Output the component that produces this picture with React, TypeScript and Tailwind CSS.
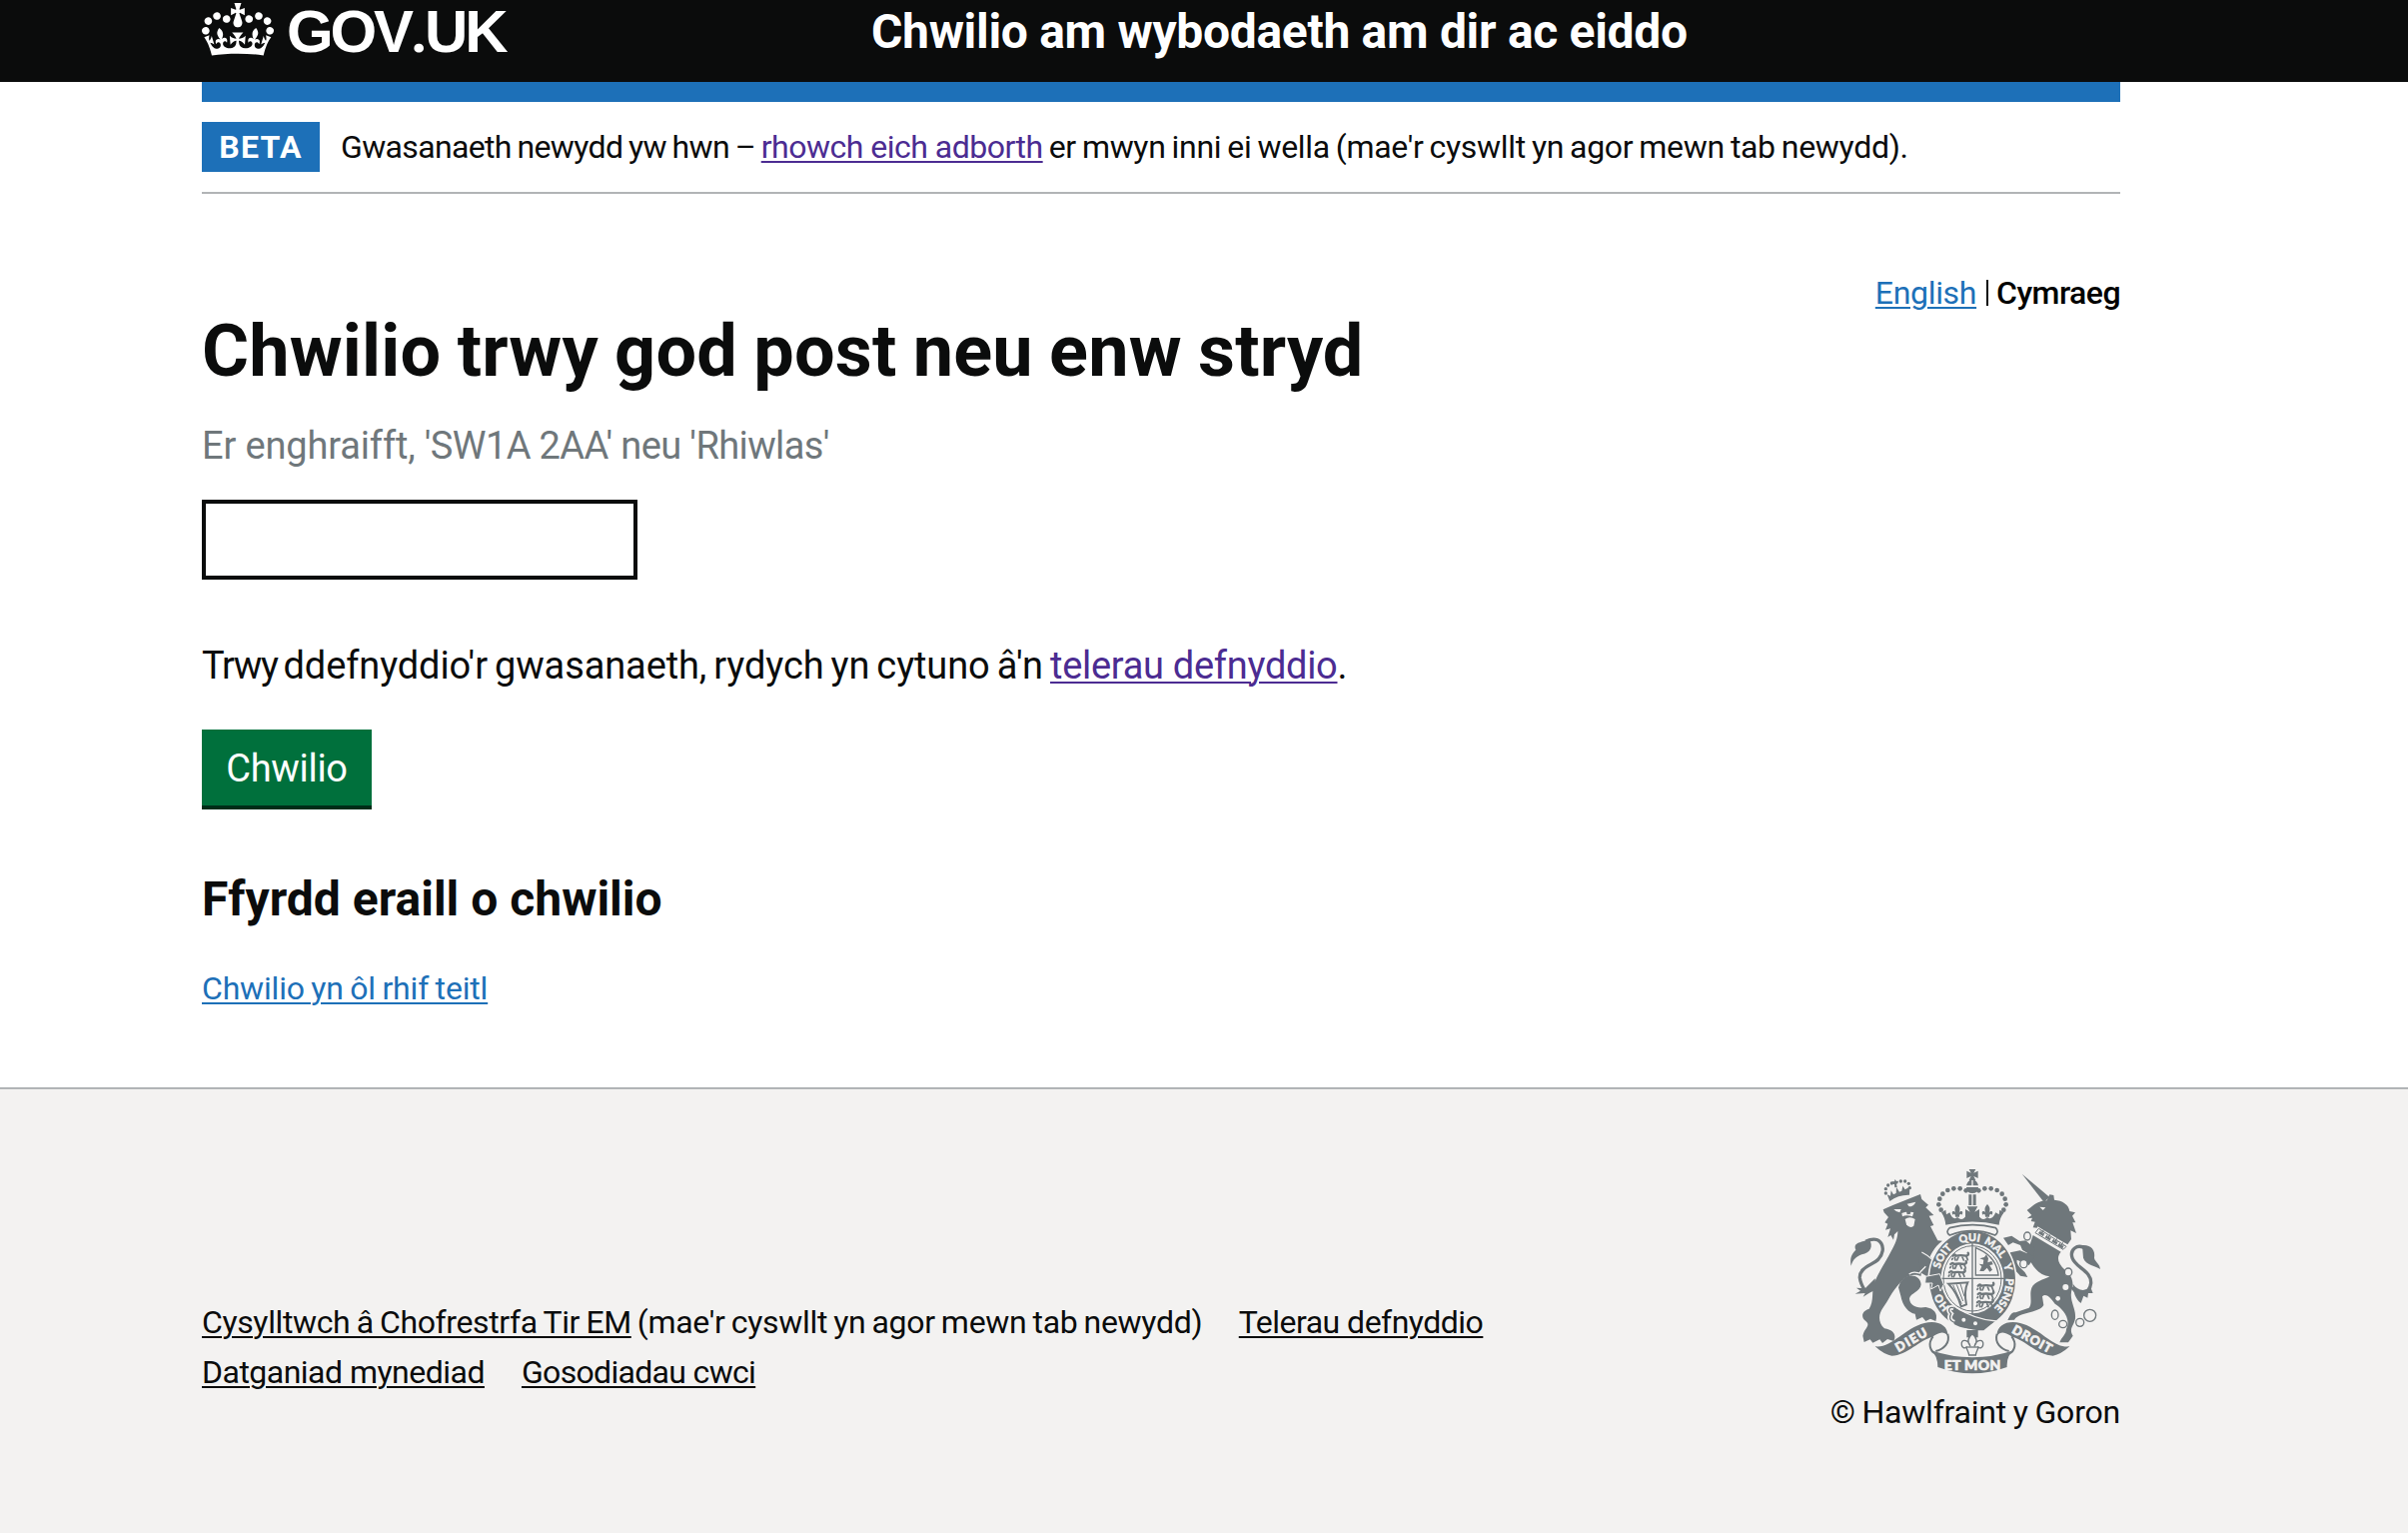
import type { ReactNode } from "react";

function Crown() {
  return (
    <svg viewBox="0 0 132 97" className="mt-[3px] h-[53px] w-[72px] shrink-0" fill="currentColor" aria-hidden="true">
      <path
        fillRule="evenodd"
        d="M25 30.2c3.5 1.5 7.7-.2 9.1-3.7 1.5-3.6-.2-7.8-3.9-9.2-3.6-1.4-7.6.3-9.1 3.9-1.4 3.5.3 7.5 3.9 9zM9 39.5c3.6 1.5 7.8-.2 9.2-3.7 1.5-3.6-.2-7.8-3.9-9.1-3.6-1.5-7.6.2-9.1 3.8-1.4 3.5.3 7.5 3.8 9zM4.4 57.2c3.5 1.5 7.7-.2 9.1-3.8 1.5-3.6-.2-7.7-3.9-9.1-3.5-1.5-7.6.3-9.1 3.8-1.4 3.5.3 7.6 3.9 9.1zm38.3-21.4c3.5 1.5 7.7-.2 9.1-3.8 1.5-3.6-.2-7.7-3.9-9.1-3.6-1.5-7.6.3-9.1 3.8-1.3 3.6.4 7.7 3.9 9.1zm64.4-5.6c-3.6 1.5-7.8-.2-9.1-3.7-1.5-3.6.2-7.8 3.8-9.2 3.6-1.4 7.7.3 9.2 3.9 1.3 3.5-.4 7.5-3.9 9zm15.9 9.3c-3.6 1.5-7.7-.2-9.1-3.7-1.5-3.6.2-7.8 3.7-9.1 3.6-1.5 7.7.2 9.2 3.8 1.5 3.5-.3 7.5-3.8 9zm4.7 17.7c-3.6 1.5-7.8-.2-9.2-3.8-1.5-3.6.2-7.7 3.9-9.1 3.6-1.5 7.7.3 9.2 3.8 1.3 3.5-.4 7.6-3.9 9.1zM89.3 35.8c-3.6 1.5-7.8-.2-9.2-3.8-1.4-3.6.2-7.7 3.9-9.1 3.6-1.5 7.7.3 9.2 3.8 1.4 3.6-.3 7.7-3.9 9.1zM69.7 17.7l8.9 4.7V9.3l-8.9 2.8c-.2-.3-.5-.6-.9-.9L72.4 0H59.6l3.5 11.2c-.3.3-.6.5-.9.9l-8.8-2.8v13.1l8.8-4.7c.3.3.6.7.9.9l-5 15.4v.1c-.2.8-.4 1.6-.4 2.4 0 4.1 3.1 7.5 7 8.1h.2c.3 0 .7.1 1 .1.4 0 .7 0 1-.1h.2c4-.6 7.1-4.1 7.1-8.1 0-.8-.1-1.7-.4-2.4V34l-5.1-15.4c.4-.2.7-.6 1-.9zM66 92.8c16.9 0 32.8 1.1 47.1 3.2 4-16.9 8.9-26.7 14-33.5l-9.6-3.4c1 4.9 1.1 7.2 0 10.2-1.5-1.4-3-4.3-4.2-8.7L108.6 76c2.8-2 5-3.2 7.5-3.3-4.4 9.4-10 11.9-13.6 11.2-4.3-.8-6.3-4.6-5.6-7.9 1-4.7 5.7-5.9 8-.5 4.3-8.7-3-11.4-7.6-8.8 7.1-7.2 7.9-13.5 2.1-21.1-8 6.1-8.1 12.3-4.5 20.8-4.7-5.4-12.1-2.5-9.5 6.2 3.4-5.2 7.9-2 7.2 3.1-.6 4.3-6.4 7.8-13.5 7.2-10.3-.9-10.9-8-11.2-13.8 2.5-.5 7.1 1.8 11 7.3L80.2 60c-4.1 4.4-8 5.3-12.3 5.4 1.4-4.4 8-11.6 8-11.6H55.5s6.4 7.2 7.9 11.6c-4.2-.1-8-1-12.3-5.4l1.4 16.4c3.9-5.5 8.5-7.7 10.9-7.3-.3 5.8-.9 12.8-11.1 13.8-7.2.6-12.9-2.9-13.5-7.2-.7-5 3.8-8.3 7.1-3.1 2.7-8.7-4.6-11.6-9.4-6.2 3.7-8.5 3.6-14.7-4.6-20.8-5.8 7.6-5 13.9 2.2 21.1-4.7-2.6-11.9.1-7.7 8.8 2.3-5.5 7.1-4.2 8.1.5.7 3.3-1.3 7.1-5.7 7.9-3.5.7-9-1.8-13.5-11.2 2.5.1 4.7 1.3 7.5 3.3l-4.7-15.4c-1.2 4.4-2.7 7.2-4.3 8.7-1.1-3-.9-5.3 0-10.2l-9.5 3.4c5 6.9 9.9 16.7 14 33.5 14.8-2.1 30.8-3.2 47.7-3.2z"
      />
    </svg>
  );
}

const INK = "#6f777b";
const PAPER = "#f3f2f1";

/* Dots of the left arch of the central crown; the right arch mirrors them. */
const ARCH: [number, number][] = [
  [383, 94], [365, 88], [346, 88], [328, 93], [313, 104], [304, 119], [301, 136], [308, 152],
];

/* Links of the unicorn's chain. */
const CHAIN: [number, number, number, number][] = [
  [567, 231, 10, 12], [556, 314, 11, 12], [690, 339, 11, 12], [650, 467, 10, 14],
  [674, 495, 12, 11], [725, 490, 12, 12], [755, 469, 18, 18],
];

function WalkingLion({ x, y }: { x: number; y: number }) {
  return (
    <g transform={`translate(${x} ${y})`} fill="none" stroke={INK} strokeWidth="7" strokeLinecap="round">
      <path d="M3 4 q6 -7 10 0 q14 -3 30 0 q10 -2 6 -9" />
      <path d="M3 12 l-2 3 m8 -7 l2 9 m9 -9 l-4 9 m16 -9 l4 9 m8 -11 l4 10" strokeWidth="5" />
    </g>
  );
}

function Fleur({ x, y }: { x: number; y: number }) {
  return (
    <path
      transform={`translate(${x} ${y})`}
      d="M0 -20 C10 -10 8 -2 5 6 C12 -4 20 4 13 12 C10 6 6 10 6 18 L-6 18 C-6 10 -10 6 -13 12 C-20 4 -12 -4 -5 6 C-8 -2 -10 -10 0 -20Z"
    />
  );
}

function CoatOfArms() {
  return (
    <svg viewBox="0 0 810 660" className="h-[220px] w-[270px]" fill={INK} aria-hidden="true">
      {/* lion */}
      <path d="M134 151 L165 137 L246 105 L250 120 L270 137 L262 145 L286 168 L272 170 L286 198 L276 201 L298 244 L312 245 C288 262 274 290 268 310 L250 335 L247 352 C238 344 205 345 186 370 C158 400 150 425 133 447 C120 465 118 490 138 508 C165 512 175 528 166 546 L147 540 L132 552 L124 541 L103 551 L95 541 L77 549 L73 530 C78 505 98 500 82 486 C66 475 70 455 92 449 C108 425 98 395 108 370 C120 340 145 302 157 278 C170 255 178 238 178 216 L168 226 L165 242 L157 228 L148 234 L156 208 L141 212 L148 194 L139 190 L150 174 L137 160Z" />
      <path d="M186 368 C205 340 246 345 248 376 C246 398 216 402 213 418 C214 440 235 449 262 444 C286 448 300 462 292 486 L276 479 L262 486 L252 474 L234 482 L230 464 C212 462 192 440 187 410 L180 385Z" />
      <path d="M250 278 C282 294 302 314 306 344 L314 374 L305 394 L300 376 L276 388 L280 370 L260 370 L266 352 L246 340 L240 300Z" />
      <path d="M250 279 C280 294 298 312 306 344" fill="none" stroke={PAPER} strokeWidth="4" />
      <path d="M212 345 C232 330 245 350 246 338 L262 322" fill="none" stroke={PAPER} strokeWidth="4" />
      <g fill={PAPER}>
        <path d="M166 150 L188 150 L184 160 Q174 160 166 150Z" />
        <path d="M206 134 L232 128 Q226 142 212 142Z" />
        <path d="M190 162 Q206 154 226 160 L222 172 Q204 166 192 172Z" />
        <path d="M200 180 Q214 170 230 180 L226 200 Q214 210 204 196Z" />
      </g>
      <path d="M204 156 L218 150 L216 164 L206 166Z" />
      {/* lion's tail */}
      <path d="M82 247 C128 224 148 268 120 300 C102 318 62 325 64 356 C66 372 72 382 78 392" fill="none" stroke={INK} strokeWidth="10" />
      <path d="M92 240 C106 260 96 282 70 286 C54 292 44 300 38 320 C34 298 38 286 52 272 C42 248 72 250 92 240Z" />
      <path d="M54 386 L80 388 L110 358 L112 392 Q96 398 74 413 L80 402 L50 404 L66 395Z" />
      {/* lion's crown */}
      <g>
        {[[142, 102], [142, 89], [149, 78], [160, 72], [187, 66], [200, 66], [211, 73], [214, 86]].map(([x, y]) => (
          <circle key={`${x}-${y}`} cx={x} cy={y} r="5" />
        ))}
        <path d="M170 60 l4 6 6 -1 -2 8 -4 1 2 10 -7 1 -1 -10 -5 0 -1 -8 6 0z" />
        <path d="M146 106 l10 4 2 -16 7 12 8 -4 1 -18 9 14 7 -3 3 -15 7 11 14 -8 -1 24 Q180 106 154 126Z" />
      </g>
      {/* unicorn */}
      <path d="M551 44 L634 114 L617 129Z" />
      <path d="M566 153 C585 138 602 124 626 124 L634 106 L646 108 L648 122 C672 124 692 136 694 156 L711 160 L702 170 L712 190 L703 190 L714 222 L697 214 L699 240 L688 256 L640 232 L596 206 L584 205 L590 188 L578 186 L582 176 L566 178 L580 168Z" />
      <path d="M604 143 l18 2 -8 8z" fill={PAPER} />
      <path d="M598 202 L690 258 L676 276 L588 224Z" fill={PAPER} />
      <path d="M601 208 L684 262 L675 271 L591 221Z" fill={PAPER} stroke={INK} strokeWidth="3" />
      <g>
        {[[612, 219], [632, 232], [652, 244], [670, 256]].map(([x, y]) => (
          <path key={x} transform={`translate(${x} ${y}) rotate(32)`} d="M-9 9 L-7 -3 L-3 3 L0 -11 L3 3 L7 -3 L9 9Z" />
        ))}
      </g>
      <path d="M584 228 L668 278 C654 294 658 312 680 332 C702 350 706 368 702 388 C690 418 712 446 711 470 C714 496 688 505 704 530 L690 550 L664 550 C668 536 684 526 684 510 C700 478 672 448 650 434 C634 412 622 402 612 412 L616 438 C604 462 542 458 528 482 L508 483 C516 466 522 458 532 460 L572 446 C584 430 572 408 580 386 C590 366 616 362 634 352 C600 348 580 320 566 284Z" />
      <path d="M495 236 L520 230 L544 246 L562 244 L590 268 L584 292 L552 272 L546 258 L524 250 L510 258Z" />
      <path d="M506 290 L516 280 L545 274 L590 292 L572 318 L536 302 C532 318 552 330 560 340 L568 354 L546 350 L524 326 C516 312 520 302 516 292Z" />
      {/* unicorn's tail */}
      <path d="M742 268 C716 252 694 272 702 296 C712 326 760 334 758 372 C756 392 746 402 728 404 C716 404 708 394 702 384" fill="none" stroke={INK} strokeWidth="10" />
      <path d="M732 258 C758 256 772 272 768 296 C770 308 784 312 786 330 C774 320 742 318 735 296Z" />
      <path d="M704 374 C718 394 740 400 756 382 L764 402 L750 402 L748 416 L736 410 L728 432 C712 420 704 398 704 374Z" />
      <g fill={PAPER} stroke={INK} strokeWidth="4">
        {CHAIN.map(([x, y, rx, ry]) => (
          <ellipse key={`${x}-${y}`} cx={x} cy={y} rx={rx} ry={ry} />
        ))}
      </g>
      <g fill={PAPER}>
        <circle cx="682" cy="384" r="9" />
        <circle cx="659" cy="418" r="7" />
      </g>
      {/* central crown */}
      {ARCH.map(([x, y]) => (
        <g key={`${x}-${y}`}>
          <circle cx={x} cy={y} r="7" />
          <circle cx={804 - x} cy={y} r="7" />
        </g>
      ))}
      <path d="M392 30 h20 l-6 11 13 -6 v22 l-13 -6 6 12 h-20 l6 -12 -13 6 v-22 l13 6z" />
      <path d="M384 79 Q388 62 400 62 V79Z M404 62 Q416 62 420 79 H404Z" />
      <path d="M384 84 H420 Q420 102 402 102 Q384 102 384 84Z" />
      <path d="M391 106 h9 v32 h-9z M404 106 h9 v32 h-9z" />
      <Fleur x={357} y={155} />
      <Fleur x={447} y={155} />
      <path d="M386 142 h32 l-9 16 14 -8 v24 h-42 v-24 l14 8z" />
      <path d="M309 160 L322 152 L324 166 L334 160 Q344 186 357 174 Q372 188 384 168 L402 172 L420 168 Q432 188 447 174 Q460 186 472 160 L482 166 L484 152 L497 160 Q484 176 482 197 Q402 178 322 197 Q320 176 309 160Z" />
      {/* garter */}
      <ellipse cx="402" cy="362" rx="134" ry="151" fill={PAPER} />
      <ellipse cx="402" cy="362" rx="129" ry="147" />
      <path d="M334 206 Q402 188 472 206 Q484 218 470 228 Q402 202 334 228 Q320 218 334 206Z" fill={PAPER} stroke={INK} strokeWidth="5" />
      <ellipse cx="402" cy="358" rx="94" ry="105" fill={PAPER} />
      <ellipse cx="402" cy="358" rx="87" ry="98" fill="none" stroke={INK} strokeWidth="3" />
      <path d="M402 252 V466 M308 358 H498" stroke={INK} strokeWidth="4" />
      <WalkingLion x={340} y={286} />
      <WalkingLion x={334} y={311} />
      <WalkingLion x={330} y={336} />
      <WalkingLion x={416} y={376} />
      <WalkingLion x={416} y={401} />
      <WalkingLion x={414} y={426} />
      <path d="M412 266 L412 348 L480 348 Q474 290 412 266Z" fill="none" stroke={INK} strokeWidth="4" />
      <path d="M424 336 l6 -14 -8 -8 12 2 2 -14 -12 -4 14 -4 6 -8 6 12 -2 12 12 -4 4 10 -10 2 8 14 -8 6 -8 -12 -10 10z" />
      <path d="M330 374 L388 370 Q376 396 384 436 L368 442 Q356 400 330 374Z" fill="none" stroke={INK} strokeWidth="6" />
      <path d="M344 378 L370 434 M355 376 L374 426 M366 374 L378 412" stroke={INK} strokeWidth="3" />
      {/* buckle and strap end */}
      <path d="M322 470 L348 446 Q400 480 470 486 L436 514 Q370 514 322 470Z" />
      <path d="M352 444 Q410 482 474 486" fill="none" stroke={PAPER} strokeWidth="4" />
      <path d="M346 446 C330 442 328 454 338 464 C330 476 336 486 348 490" fill="none" stroke={PAPER} strokeWidth="14" />
      <path d="M346 446 C330 442 328 454 338 464 C330 476 336 486 348 490 L360 494" fill="none" stroke={INK} strokeWidth="4" />
      <circle cx="376" cy="482" r="6" fill={PAPER} />
      <circle cx="411" cy="493" r="6" fill={PAPER} />
      <path id="garter-line" d="M402 474 A101 114 0 0 1 402 246 A101 114 0 0 1 402 474" fill="none" />
      <g fill={PAPER} stroke={PAPER} strokeWidth="1.2" fontFamily="Lato, sans-serif" fontWeight="900" fontSize="32" textAnchor="middle">
        <text><textPath href="#garter-line" startOffset="15%">HO</textPath></text>
        <text><textPath href="#garter-line" startOffset="35%">SOIT</textPath></text>
        <text><textPath href="#garter-line" startOffset="48.8%">QUI</textPath></text>
        <text><textPath href="#garter-line" startOffset="60.3%">MAL</textPath></text>
        <text><textPath href="#garter-line" startOffset="70%">Y</textPath></text>
        <text><textPath href="#garter-line" startOffset="82%">PENSE</textPath></text>
      </g>
      {/* lion's paw over the garter */}
      <path d="M262 352 L304 344 L316 376 L306 396 L300 378 L278 390 L282 372 L260 372Z" stroke={PAPER} strokeWidth="3" />
      {/* motto ribbon */}
      <path d="M110 562 C160 568 196 508 258 492 C296 482 330 498 328 530 C316 512 296 522 282 534 C246 540 206 590 160 590 Q136 586 110 562Z" />
      <path d="M694 562 C644 568 608 508 546 492 C508 482 474 498 476 530 C488 512 508 522 522 534 C558 540 598 590 644 590 Q668 586 694 562Z" />
      <path d="M284 532 C268 552 274 576 292 584 M328 524 C336 552 316 570 292 576 M520 532 C536 552 530 576 512 584 M476 524 C468 552 488 570 512 576" fill="none" stroke={INK} strokeWidth="6" />
      <path d="M278 574 Q402 616 526 574 Q504 590 506 624 Q402 662 298 624 Q298 590 278 574Z" />
      <g fill={PAPER} stroke={PAPER} strokeWidth="2" fontFamily="Lato, sans-serif" fontWeight="900" textAnchor="middle">
        <text fontSize="38" transform="translate(225 554) rotate(-30)" textLength="104">DIEU</text>
        <text fontSize="38" transform="translate(575 551) rotate(29)" textLength="130">DROIT</text>
        <text fontSize="42" x="402" y="632" textLength="170">ET MON</text>
      </g>
      {/* badge under the shield */}
      <path d="M385 513 h34 v22 h-34z" />
      <g fill={PAPER} stroke={INK} strokeWidth="4">
        <path d="M402 524 C418 538 416 552 408 562 C414 540 438 538 434 558 C432 568 424 568 420 564 C418 574 412 580 412 588 L392 588 C392 580 386 574 384 564 C380 568 372 568 370 558 C366 538 390 540 396 562 C388 552 386 538 402 524Z" />
        <path d="M384 564 H420" />
      </g>
    </svg>
  );
}

function Link({ children, className }: { children: ReactNode; className: string }) {
  return (
    <a href="#" className={`underline decoration-2 underline-offset-[3px] ${className}`}>
      {children}
    </a>
  );
}

export default function App() {
  return (
    <div className="flex min-h-[1534px] w-full flex-col overflow-x-hidden bg-white font-[Roboto,sans-serif] text-[#0b0c0c]">
      <header className="h-[82px] bg-[#0b0c0c] text-white">
        <div className="ml-[202px] flex w-[1920px] items-start">
          <div className="flex w-[670px] items-start">
            <Crown />
            <span className="ml-[13px] font-['Liberation_Sans',sans-serif] text-[60px] leading-[63px] font-bold tracking-[-0.053em] whitespace-nowrap">
              GOV<span className="font-[Roboto,sans-serif]">.</span>UK
            </span>
          </div>
          <span className="mt-[8px] text-[48px] leading-[48px] font-bold tracking-[-0.0064em] whitespace-nowrap">
            Chwilio am wybodaeth am dir ac eiddo
          </span>
        </div>
      </header>

      <div className="ml-[202px] flex h-[1006px] w-[1920px] flex-col items-start">
        <div className="h-[20px] w-full bg-[#1d70b8]" />
        <div className="flex h-[92px] w-full items-start border-b-2 border-[#b1b4b6] pt-[20px] text-[32px]">
          <strong className="h-[50px] w-[118px] bg-[#1d70b8] text-center leading-[51px] font-bold tracking-[0.04em] text-white">BETA</strong>
          <p className="ml-[21px] leading-[51px] whitespace-pre">
            <span className="tracking-[-0.0203em] [word-spacing:-0.05em]">Gwasanaeth newydd yw hwn – </span>
            <Link className="tracking-[-0.0158em] text-[#4c2c92]">rhowch eich adborth</Link>
            <span className="tracking-[-0.0098em] [word-spacing:-0.05em]"> er mwyn inni ei wella (mae'r cyswllt yn agor mewn tab newydd).</span>
          </p>
        </div>

        <div className="mt-[80px] flex h-[38px] w-full items-center justify-end text-[32px] leading-[38px]">
          <Link className="tracking-[-0.01em] text-[#1d70b8]">English</Link>
          <span className="ml-[10px] h-[26px] w-[2px] bg-[#0b0c0c]" />
          <span className="ml-[8px] font-medium tracking-[-0.017em] text-black">Cymraeg</span>
        </div>

        <h1 className="text-[72px] leading-[80px] font-bold tracking-[0.0025em] whitespace-nowrap [word-spacing:-0.025em]">
          Chwilio trwy god post neu enw stryd
        </h1>
        <p className="mt-[29px] text-[38px] leading-[50px] whitespace-pre text-[#6f777b]">
          <span className="tracking-[-0.004em]">Er enghraifft, </span>
          <span className="tracking-[-0.0162em]">'SW1A 2AA' neu 'Rhiwlas'</span>
        </p>
        <input className="mt-[29px] h-[80px] w-[436px] border-4 border-[#0b0c0c] bg-white" />
        <p className="mt-[61px] text-[38px] leading-[50px] whitespace-pre">
          <span className="tracking-[-0.035em] [word-spacing:-0.06em]">Trwy </span>
          <span className="tracking-[-0.0029em] [word-spacing:-0.06em]">ddefnyddio'r gwasanaeth, rydych yn cytuno â'n </span>
          <Link className="tracking-[-0.0077em] text-[#4c2c92]">telerau defnyddio</Link>.
        </p>
        <button className="mt-[39px] h-[80px] w-[170px] border-b-4 border-[#002d18] bg-[#00703c] pt-[2px] text-center text-[38px] leading-[74px] tracking-[-0.0085em] text-white">
          Chwilio
        </button>
        <h2 className="mt-[60px] text-[48px] leading-[60px] font-bold">Ffyrdd eraill o chwilio</h2>
        <Link className="mt-[39px] text-[32px] leading-[40px] tracking-[-0.0055em] text-[#1d70b8] [word-spacing:-0.04em]">Chwilio yn ôl rhif teitl</Link>
      </div>

      <footer className="grow border-t-2 border-[#b1b4b6] bg-[#f3f2f1]">
        <div className="ml-[202px] flex w-[1920px] items-start justify-between text-[32px]">
          <div className="mt-[208px] leading-[50px] whitespace-nowrap">
            <div className="flex">
              <Link className="tracking-[-0.0116em] [word-spacing:-0.04em]">Cysylltwch â Chofrestrfa Tir EM</Link>
              <span className="ml-[6px] w-[602px] tracking-[-0.009em] [word-spacing:-0.05em]">(mae'r cyswllt yn agor mewn tab newydd)</span>
              <Link className="tracking-[-0.0161em]">Telerau defnyddio</Link>
            </div>
            <div className="flex gap-[37px]">
              <Link className="tracking-[-0.0161em]">Datganiad mynediad</Link>
              <Link className="tracking-[-0.0212em]">Gosodiadau cwci</Link>
            </div>
          </div>
          <div className="mt-[70px] flex flex-col items-end">
            <div className="mr-[12px]">
              <CoatOfArms />
            </div>
            <span className="mt-[13px] leading-[40px] tracking-[-0.0065em] whitespace-nowrap [word-spacing:-0.03em]">© Hawlfraint y Goron</span>
          </div>
        </div>
      </footer>
    </div>
  );
}
